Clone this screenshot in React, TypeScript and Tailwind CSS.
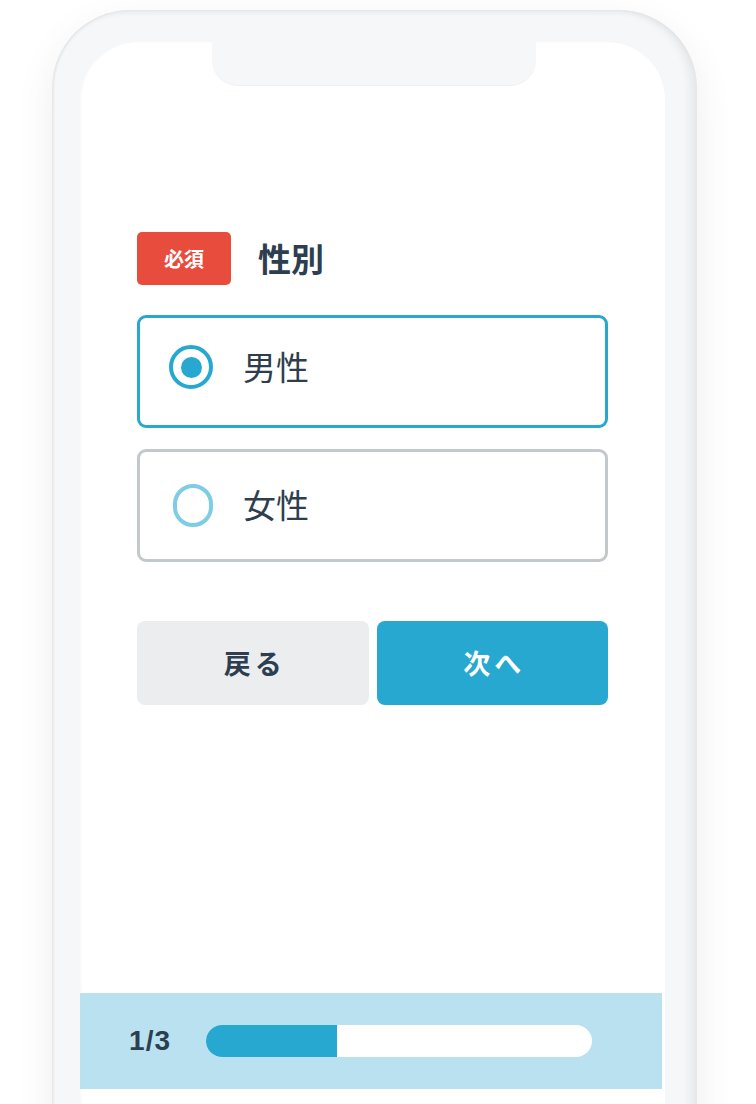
import { useState } from 'react';

type Option = { id: string; label: string };

const options: Option[] = [
  { id: 'male', label: '男性' },
  { id: 'female', label: '女性' },
];

const jp = { fontFamily: '"Noto Sans CJK JP", "Noto Sans", sans-serif' };

const Radio = ({ checked }: { checked: boolean }) =>
  checked ? (
    <span className="flex h-[44px] w-[44px] items-center justify-center rounded-full border-[4px] border-[#27a8d0]">
      <span className="h-[21px] w-[21px] rounded-full bg-[#27a8d0]" />
    </span>
  ) : (
    <span className="ml-[4px] h-[43px] w-[43px] rounded-full border-[4px] border-[#7ecde4]" />
  );

const App = () => {
  const [selected, setSelected] = useState('male');
  const step = 1;
  const total = 3;

  return (
    <div className="h-[1104px] w-[756px] overflow-hidden bg-white" style={jp}>
      <div className="ml-[52px] mt-[10px] h-[1200px] w-[645px] rounded-[78px] bg-[#f6f7f8] pl-[28px] pr-[32px] pt-[32px] shadow-[0_14px_40px_rgba(0,0,0,0.07),inset_-7px_0_8px_rgba(0,0,0,0.06),inset_2px_0_2px_rgba(0,0,0,0.05),inset_0_3px_4px_rgba(0,0,0,0.03)]">
        <div className="flex h-full flex-col rounded-t-[58px] bg-white shadow-[inset_1px_0_2px_rgba(0,0,0,0.03)]">
          {/* notch */}
          <div className="ml-[132px] h-[44px] w-[324px] rounded-b-[26px] bg-[#f6f7f8] shadow-[inset_0_-1px_1px_rgba(0,0,0,0.03)]" />

          <div className="px-[57px] pt-[146px]">
            <div className="flex items-center">
              <span className="flex h-[53px] w-[94px] items-center justify-center rounded-[5px] bg-[#e84c3d] text-[20px] font-bold text-white">
                必須
              </span>
              <h2 className="ml-[27px] text-[33px] font-bold leading-none text-[#2c3e50]">性別</h2>
            </div>

            <div className="mt-[30px] flex flex-col gap-[21px]">
              {options.map((o) => {
                const checked = selected === o.id;
                return (
                  <button
                    key={o.id}
                    onClick={() => setSelected(o.id)}
                    className={`flex h-[113px] items-center gap-[30px] rounded-[9px] border-[3px] pl-[29px] text-left ${
                      checked ? 'border-[#27a8d0] pb-[9px]' : 'border-[#c3c8cc]'
                    }`}
                  >
                    <span className="flex w-[44px] items-center">
                      <Radio checked={checked} />
                    </span>
                    <span className="-translate-y-[1px] text-[33px] leading-none text-[#2f3e4e]">{o.label}</span>
                  </button>
                );
              })}
            </div>

            <div className="mt-[59px] grid grid-cols-2 gap-2">
              <button className="flex h-[84px] items-center justify-center rounded-[8px] bg-[#ecedef] pl-[4px] text-[27px] font-bold tracking-[0.15em] text-[#2c3e50]">
                戻る
              </button>
              <button className="flex h-[84px] items-center justify-center rounded-[8px] bg-[#27a8d0] pl-[4px] text-[27px] font-bold tracking-[0.15em] text-white">
                次へ
              </button>
            </div>
          </div>

          <div className="mt-[288px] flex h-[96px] w-[582px] items-center bg-[#b9e1ef] pl-[49px]">
            <span
              className="w-[43px] text-[28px] font-bold leading-none tracking-[0.04em] text-[#2c3e50]"
              style={{ fontFamily: '"Liberation Sans", Arial, sans-serif' }}
            >
              {step}/{total}
            </span>
            <div className="ml-[34px] h-[32px] w-[386px] overflow-hidden rounded-full bg-white">
              <div className="h-full bg-[#27a8d0]" style={{ width: `${(step / total) * 102}%` }} />
            </div>
          </div>
        </div>
      </div>
    </div>
  );
};

export default App;
